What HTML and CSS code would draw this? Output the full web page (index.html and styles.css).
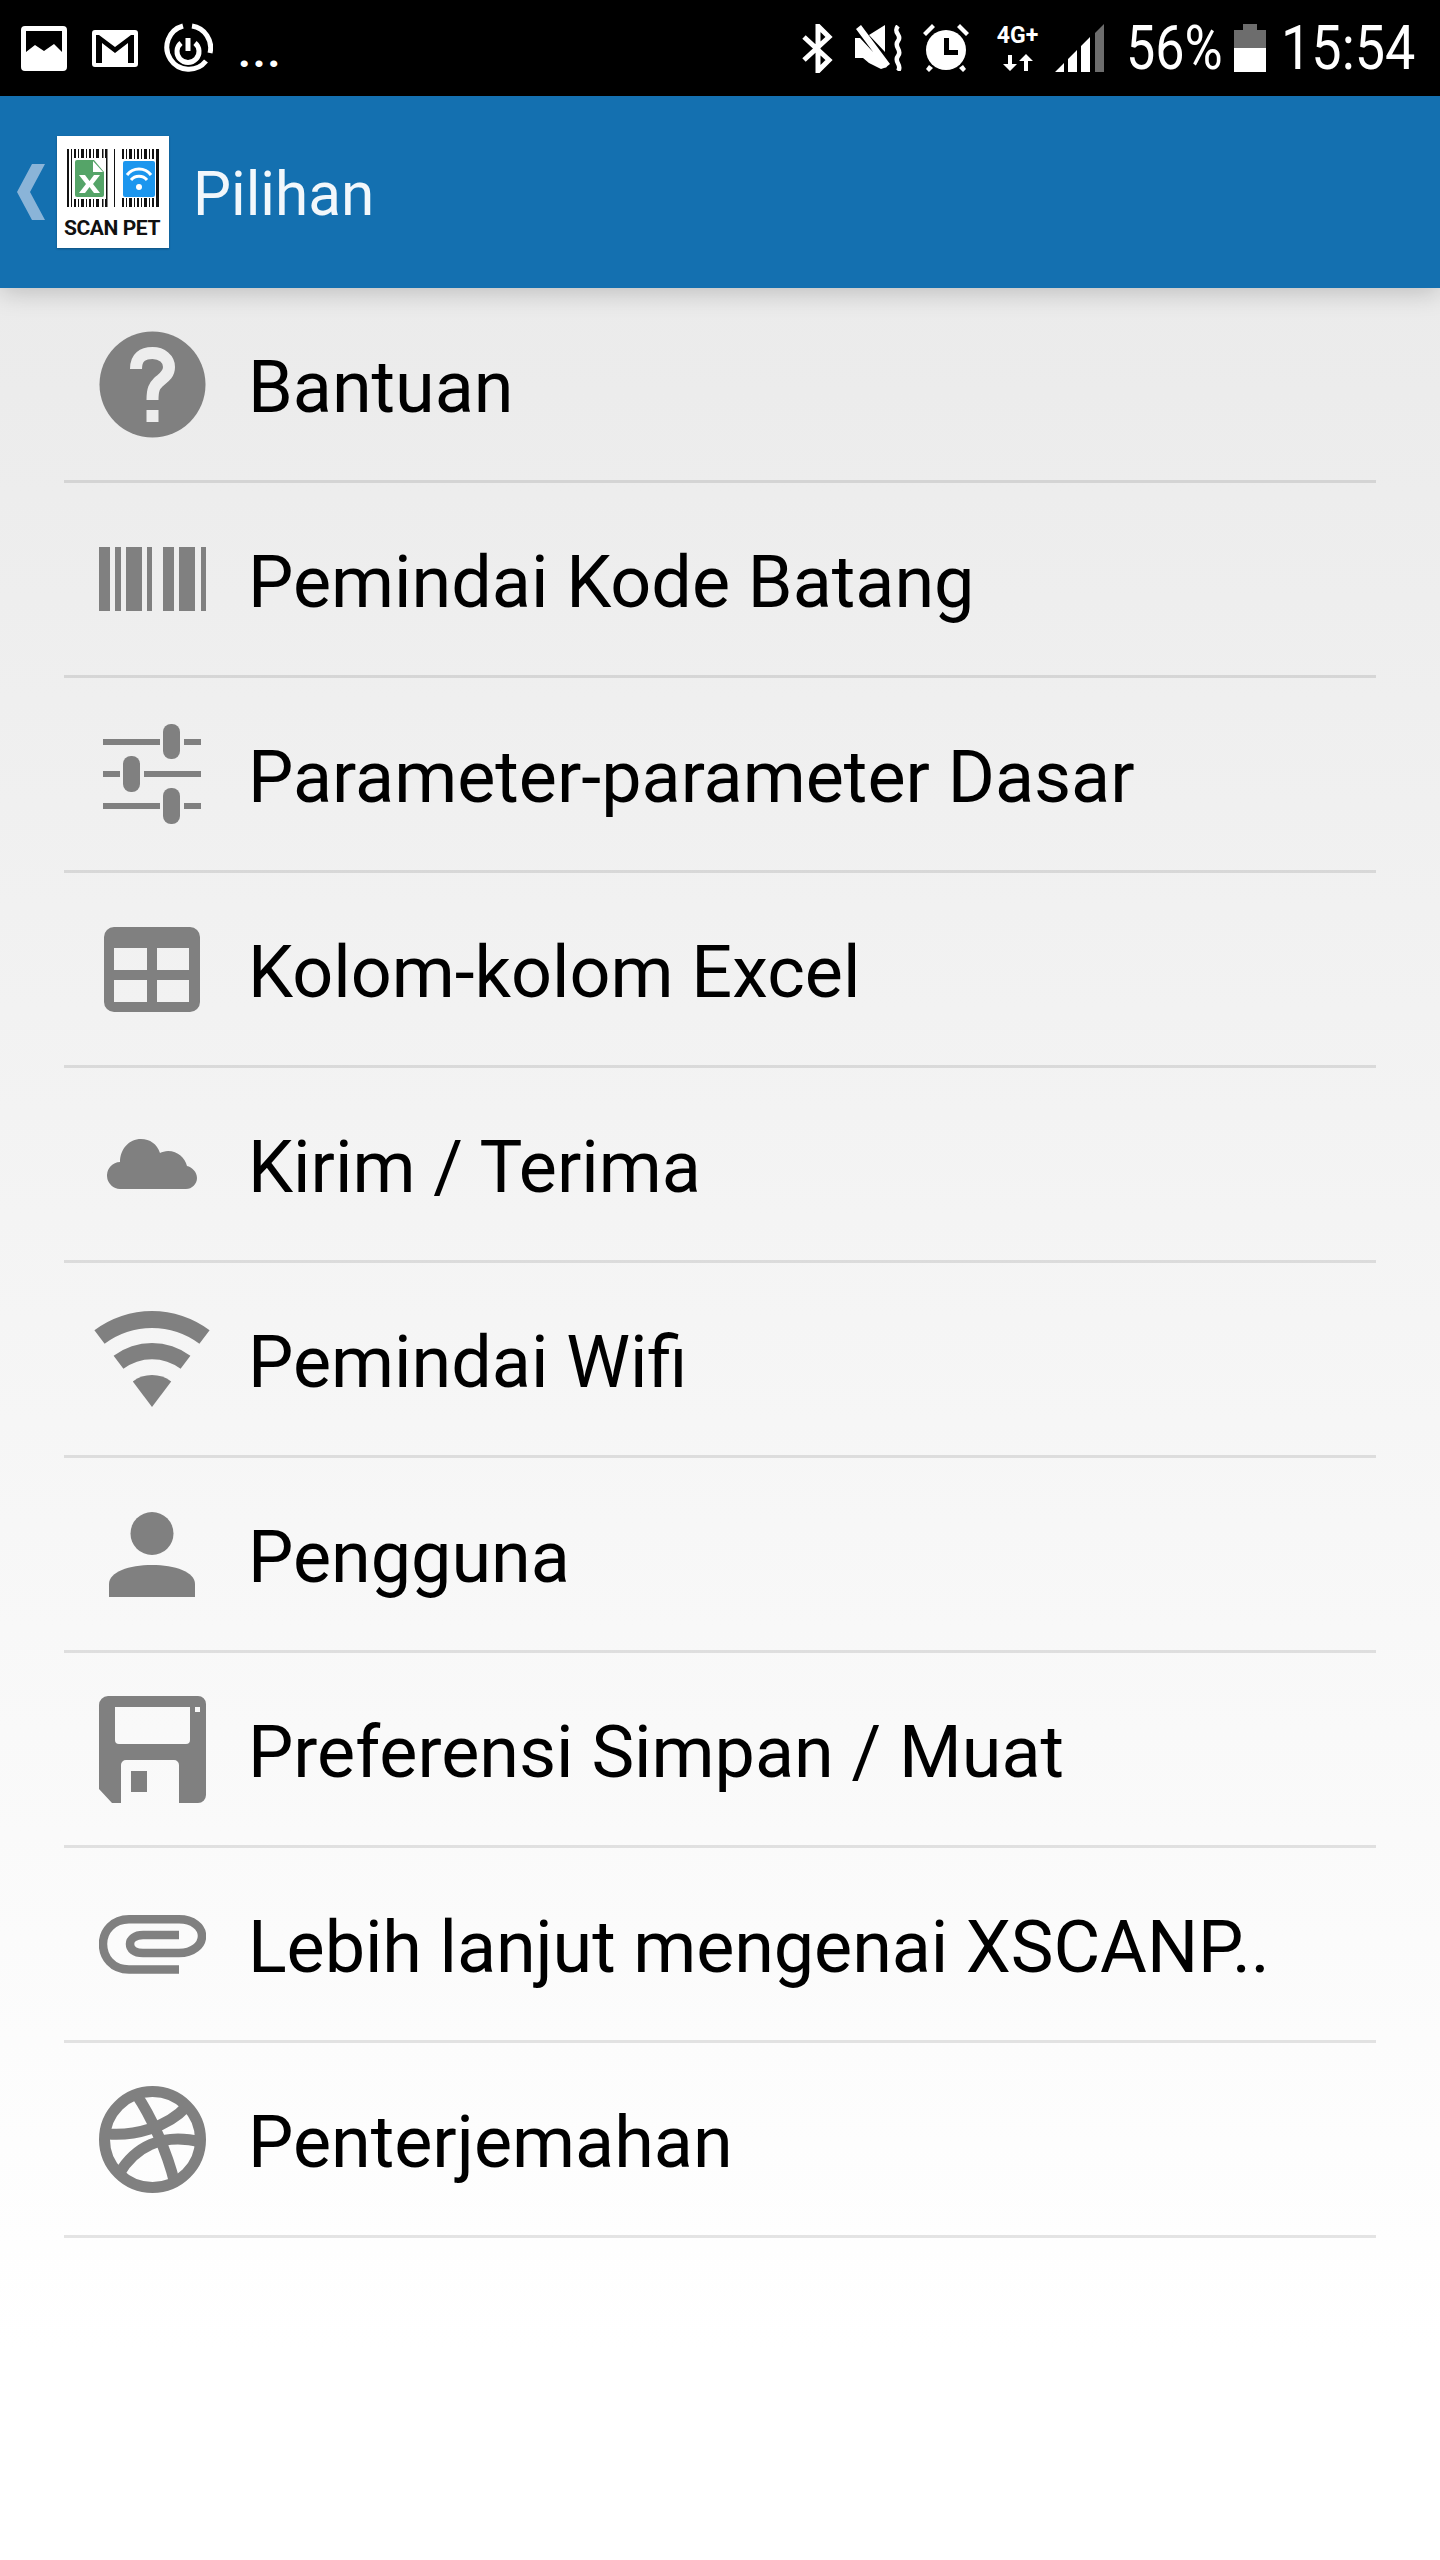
FILE: index.html
```html
<!DOCTYPE html>
<html lang="en">
  <head>
    <meta charset="UTF-8">
    <title>Pilihan</title>
    <link rel="stylesheet" href="styles.css">
  </head>
  <body>

    <div class="statusbar">
      <div class="status-left">
        <svg width="46" height="45" viewBox="0 0 46 45"><path fill="#fff" fill-rule="evenodd" d="M4 0h38a4 4 0 0 1 4 4v37a4 4 0 0 1-4 4H4a4 4 0 0 1-4-4V4a4 4 0 0 1 4-4zM5 5v21l9-7 9 6 10-7 8 8V5z"/></svg>
        <svg width="46" height="37" viewBox="0 0 46 37"><path fill="#fff" fill-rule="evenodd" d="M3 0h40a3 3 0 0 1 3 3v31a3 3 0 0 1-3 3H3a3 3 0 0 1-3-3V3a3 3 0 0 1 3-3zM4 5v28h6V13l13 10 13-10v20h6V5h-3L23 17 7 5z"/></svg>
        <svg width="50" height="50" viewBox="0 0 50 50"><g fill="none" stroke="#fff"><path stroke-width="5" d="M29 3a22 22 0 0 1 18 27M43 38A22 22 0 1 1 20 3"/><path stroke-width="5" d="M18 20a11 11 0 1 0 14 0M25 15v13"/></g></svg>
        <span class="st-dots">...</span>
      </div>
      <div class="status-right">
        <svg class="st-bt" width="31" height="49" viewBox="0 0 31 49"><path fill="none" stroke="#fff" stroke-width="5" d="M2 13l25 23-11 11V2l11 11L2 36"/></svg>
        <svg class="st-mute" width="50" height="46" viewBox="0 0 50 46"><path fill="#fff" d="M0 13h5l27 29-6 2-12-6-6-5H0zM14 10L30 0v27zM1 4l5-4 29 39-5 4z"/><path fill="none" stroke="#fff" stroke-width="4.500" d="M43 1c-6 7 5 9 0 15s5 9 0 15 5 9 0 15"/></svg>
        <svg class="st-alarm" width="46" height="48" viewBox="0 0 46 48" fill="#fff"><circle cx="23" cy="26" r="20"/><path d="M0 9l9-9 3 3-9 9zM46 9l-9-9-3 3 9 9zM6 41l4 3-4 4-3-3zM40 41l-4 3 4 4 3-3z"/><path fill="#000" d="M21 14h5v12h9v5H21z"/></svg>
        <span class="st-net">
          <span class="st-4g">4G+</span>
          <svg width="30" height="17" viewBox="0 0 30 17"><path fill="#fff" d="M5 1h4v9h5l-7 7-7-7h5zM21 17h4V7h5l-7-7-7 7h5z"/></svg>
        </span>
        <svg class="st-signal" width="49" height="48" viewBox="0 0 49 48"><path fill="#fff" d="M0 48l9-9v9zM13 48V35l9-9v22zM26 48V22l9-9v35z"/><path fill="#6d6d6d" d="M40 48V9l9-9v48z"/></svg>
        <span class="st-percent">56%</span>
        <svg class="st-batt" width="32" height="48" viewBox="0 0 32 48"><path fill="#6d6d6d" d="M0 6h9V0h14v6h9v18H0z"/><path fill="#fff" d="M0 24h32v24H0z"/></svg>
        <span class="st-time">15:54</span>
      </div>
    </div>

    <header class="appbar">
      <svg class="back" width="28" height="56" viewBox="0 0 28 56"><path fill="#8ab4d8" d="M15 0h13L13 28l15 28H15L0 28z"/></svg>
      <div class="logo">
        <svg class="logo-art" width="92" height="58" viewBox="0 0 92 58">
          <g fill="#111"><path d="M0 0h2v58H0zM4 0h1v58H4zM7 0h2v58H7zM11 0h1v58h-1zM14 0h3v58h-3zM19 0h1v58h-1zM22 0h2v58h-2zM26 0h1v58h-1zM29 0h3v58h-3zM35 0h1.500v58H35zM38 0h2.500v58H38zM47 0h1v58h-1z"/><path d="M55 0h2v58h-2zM59 0h1v58h-1zM62 0h3v58h-3zM67 0h1v58h-1zM70 0h2v58h-2zM74 0h1v58h-1zM77 0h3v58h-3zM82 0h1v58h-1zM85 0h2v58h-2zM89 0h3v58h-3z"/></g>
          <path fill="#fff" d="M7 9h32v41H7zM55 10h34v39H55z"/>
          <path fill="#55a468" d="M10 11h17l10 12v23a2 2 0 0 1-2 2H10a2 2 0 0 1-2-2V13a2 2 0 0 1 2-2z"/>
          <path fill="#fff" d="M26 12l10 11H26zM12 26h6l4.500 6 4.500-6h6l-7 9 7 9h-6l-4.500-6-4.500 6h-6l7-9z"/>
          <rect x="56" y="12" width="32" height="36" rx="2" fill="#1c96ee"/>
          <g fill="none" stroke="#fff" stroke-width="3"><path d="M60 26c6-8 18-8 24 0M64 31c4-5 12-5 16 0"/></g>
          <circle cx="72" cy="38" r="3" fill="#fff"/>
        </svg>
        <span class="logo-name">SCAN PET</span>
      </div>
      <span class="appbar-title">Pilihan</span>
    </header>

    <ul class="menu">
      <li class="menu-row">
        <span class="menu-icon"><svg width="107" height="107" viewBox="0 0 107 107"><circle cx="53.500" cy="53.500" r="53" fill="#808080"/><path fill="none" stroke="#ededed" stroke-width="12" d="M37 38c0-12 7-16 16.500-16S70 28 70 36c0 8-6 11-10.500 15-4 4-6 7-6 18"/><path fill="#ededed" d="M47.500 79h12v12h-12z"/></svg></span>
        <span class="menu-label">Bantuan</span>
      </li>
      <li class="menu-row">
        <span class="menu-icon"><svg width="107" height="64" viewBox="0 0 107 64"><path fill="#808080" d="M0 0h11v64H0zM16 0h6v64h-6zM27 0h16v64H27zM48 0h5v64h-5zM64 0h11v64H64zM80 0h16v64H80zM102 0h5v64h-5z"/></svg></span>
        <span class="menu-label">Pemindai Kode Batang</span>
      </li>
      <li class="menu-row">
        <span class="menu-icon"><svg width="98" height="100" viewBox="0 0 98 100"><g fill="#808080"><path d="M0 15h57v6H0zM81 15h17v6H81zM0 47h17v6H0zM41 47h57v6H41zM0 79h57v6H0zM81 79h17v6H81z"/><rect x="60" y="0" width="17" height="35" rx="8"/><rect x="20" y="32" width="17" height="36" rx="8"/><rect x="60" y="64" width="17" height="36" rx="8"/></g></svg></span>
        <span class="menu-label">Parameter-parameter Dasar</span>
      </li>
      <li class="menu-row">
        <span class="menu-icon"><svg width="96" height="85" viewBox="0 0 96 85"><path fill="#808080" fill-rule="evenodd" d="M10 0h76a10 10 0 0 1 10 10v65a10 10 0 0 1-10 10H10A10 10 0 0 1 0 75V10A10 10 0 0 1 10 0zM10 21v22h33V21zM53 21v22h32V21zM10 53v22h33V53zM53 53v22h32V53z"/></svg></span>
        <span class="menu-label">Kolom-kolom Excel</span>
      </li>
      <li class="menu-row">
        <span class="menu-icon"><svg width="90" height="50" viewBox="0 0 90 50"><path fill="#808080" d="M14 50a13.500 13.500 0 0 1-1-27c0-13 9-23 21-23 9 0 16 5 19 14 2-1 5-2 8-2 10 0 17 7 19 15 5 1 10 6 10 12 0 6-5 11-11 11z"/></svg></span>
        <span class="menu-label">Kirim / Terima</span>
      </li>
      <li class="menu-row">
        <span class="menu-icon"><svg width="116" height="96" viewBox="-1 0 116 96"><g fill="#808080"><path d="M-.6 19.200A96 96 0 0 1 114.600 19.200L104.400 32.800A79 79 0 0 0 9.600 32.800z"/><path d="M18.600 44.800A64 64 0 0 1 95.400 44.800L85.600 57.800A47.700 47.700 0 0 0 28.400 57.800z"/><path d="M37.800 70.400A32 32 0 0 1 76.200 70.400L57 96z"/></g></svg></span>
        <span class="menu-label">Pemindai Wifi</span>
      </li>
      <li class="menu-row">
        <span class="menu-icon"><svg width="86" height="85" viewBox="0 0 86 85"><g fill="#808080"><circle cx="43" cy="21.500" r="21.500"/><path d="M0 85V72c0-12 20-19 43-19s43 7 43 19v13z"/></g></svg></span>
        <span class="menu-label">Pengguna</span>
      </li>
      <li class="menu-row">
        <span class="menu-icon"><svg width="107" height="107" viewBox="0 0 107 107"><path fill="#808080" fill-rule="evenodd" d="M9 0h90a8 8 0 0 1 8 8v91a8 8 0 0 1-8 8H80V69a5 5 0 0 0-5-5H27a5 5 0 0 0-5 5v38h-9L0 93V9a9 9 0 0 1 9-9zM16 11v33a4 4 0 0 0 4 4h67a4 4 0 0 0 4-4V11zM96 11v5h5v-5zM32 75h16v21H32z"/></svg></span>
        <span class="menu-label">Preferensi Simpan / Muat</span>
      </li>
      <li class="menu-row">
        <span class="menu-icon"><svg width="107" height="59" viewBox="0 0 107 59"><path fill="none" stroke="#808080" stroke-width="8.500" d="M80 54.500H30C13 54.500 4 42 4 29S14 4.300 30 4.300h50c14 0 23 7.700 23 16.700S94 38 80 38H44c-9 0-13-4-13-9s5-9 13-9h36"/></svg></span>
        <span class="menu-label menu-label-long">Lebih lanjut mengenai XSCANP..</span>
      </li>
      <li class="menu-row">
        <span class="menu-icon"><svg width="107" height="107" viewBox="0 0 107 107"><g fill="none" stroke="#808080" stroke-width="11"><circle cx="53.500" cy="53.500" r="48"/><path d="M9 48c26 2 59-6 79-28"/><path d="M37 8c15 22 31 57 39 90"/><path d="M20 88c15-26 42-42 82-32"/></g></svg></span>
        <span class="menu-label">Penterjemahan</span>
      </li>
    </ul>

  </body>
</html>
```

FILE: styles.css
```css
html {
  box-sizing: border-box;
}

*,
*::before,
*::after {
  box-sizing: inherit;
}

body {
  margin: 0;
  width: 1440px;
  height: 2560px;
  overflow: hidden;
  font-family: Roboto, "Noto Sans", sans-serif;
  background: linear-gradient(#ebebeb 288px, #ffffff 2350px);
}

/* Status bar */

.statusbar {
  height: 96px;
  background-color: #000;
  color: #fff;
  display: flex;
  justify-content: space-between;
  align-items: center;
  padding: 0 27px 0 21px;
}

.status-left,
.status-right {
  display: flex;
  align-items: center;
}

.status-left {
  gap: 25px;
}

.status-right svg,
.status-right span {
  flex: none;
}

.st-dots {
  font-size: 44px;
  font-weight: 700;
  letter-spacing: 2px;
  line-height: 1;
  margin-top: 8px;
}

.st-mute {
  margin-left: 22px;
}

.st-alarm {
  margin-left: 18px;
}

.st-net {
  display: flex;
  flex-direction: column;
  align-items: center;
  width: 49px;
  margin-left: 24px;
}

.st-4g {
  font-size: 23px;
  font-weight: 700;
  line-height: 20px;
  margin-bottom: 8px;
}

.st-signal {
  margin-left: 13px;
}

/* no condensed face here, so the digits are squeezed to the phone's width */
.st-percent,
.st-time {
  font-size: 62px;
  font-weight: 400;
  line-height: 1;
  white-space: nowrap;
  transform-origin: left center;
}

.st-percent {
  width: 94px;
  margin-left: 22px;
  transform: scaleX(0.84);
}

.st-batt {
  margin-left: 14px;
}

.st-time {
  width: 132px;
  margin-left: 15px;
  transform: scaleX(0.87);
}

/* App bar */

.appbar {
  height: 192px;
  background-color: #1470b0;
  display: flex;
  align-items: center;
  padding-left: 17px;
  position: relative;
  box-shadow: 0 4px 24px rgba(0, 0, 0, 0.2);
}

.back {
  margin-right: 12px;
  flex: none;
}

.logo {
  width: 112px;
  height: 112px;
  background-color: #fff;
  box-shadow: 0 1px 2px rgba(0, 0, 0, 0.3);
  display: flex;
  flex-direction: column;
  align-items: center;
  padding: 13px 2px 0 0;
}

.logo-art {
  margin-left: 2px;
}

.logo-name {
  font-size: 21px;
  font-weight: 700;
  letter-spacing: -0.4px;
  line-height: 20px;
  margin-top: 11px;
  color: #111;
  white-space: nowrap;
}

.appbar-title {
  color: #f2f7fb;
  font-size: 60.3px;
  margin-left: 24px;
  padding-top: 4px;
}

/* Menu */

.menu {
  list-style: none;
  margin: 0;
  padding: 0 64px;
}

.menu-row {
  height: 195px;
  display: flex;
  align-items: center;
  border-bottom: 3px solid rgba(0, 0, 0, 0.1);
}

.menu-icon {
  width: 184px;
  padding-right: 8px;
  display: flex;
  justify-content: center;
  flex: none;
}

.menu-icon svg {
  display: block;
}

.menu-label {
  font-size: 71.9px;
  color: #000;
  white-space: nowrap;
  padding-top: 6px;
}

.menu-label-long {
  letter-spacing: -0.1px;
}
```
